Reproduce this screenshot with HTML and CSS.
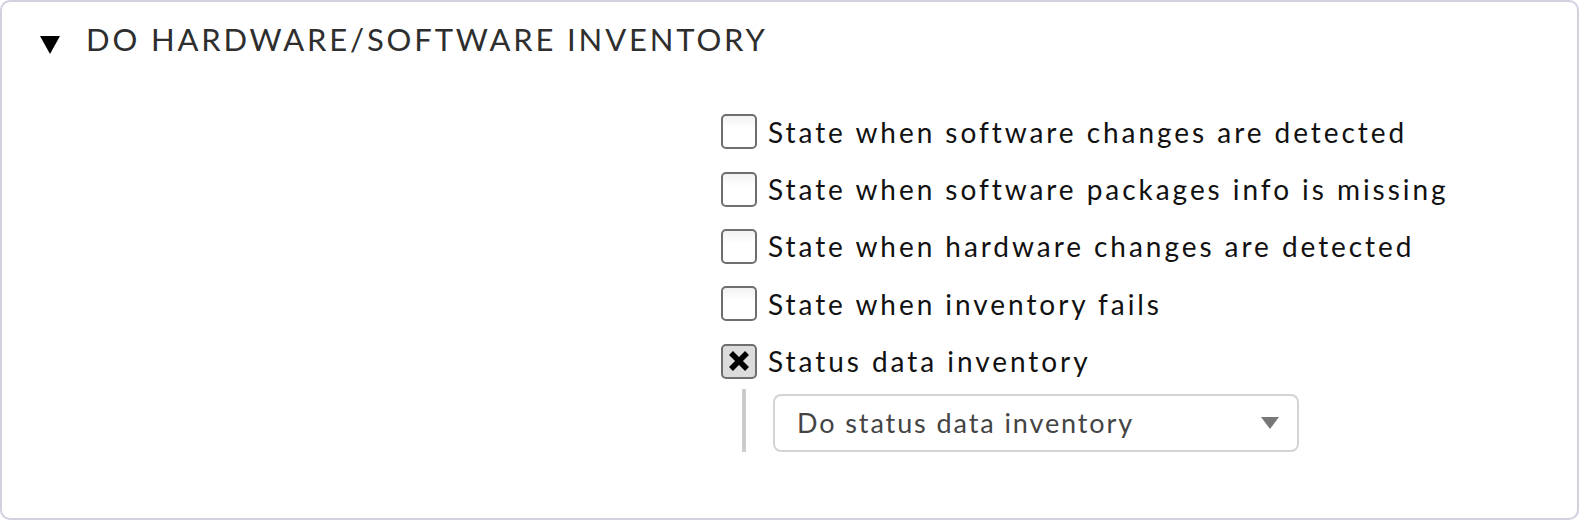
FILE: index.html
```html
<!DOCTYPE html>
<html>
<head>
<meta charset="utf-8">
<link rel="stylesheet" href="styles.css">
</head>
<body>
<div class="box">
  <div class="header">
    <span class="tri"></span>
    <span class="title">DO HARDWARE/SOFTWARE INVENTORY</span>
  </div>
  <div class="content">
    <div class="row"><span class="cb"></span><span class="label">State when software changes are detected</span></div>
    <div class="row"><span class="cb"></span><span class="label">State when software packages info is missing</span></div>
    <div class="row"><span class="cb"></span><span class="label">State when hardware changes are detected</span></div>
    <div class="row"><span class="cb"></span><span class="label">State when inventory fails</span></div>
    <div class="row"><span class="cb checked"><svg class="x" viewBox="0 0 22 20" width="22" height="20"><path d="M3 2 L19 18 M19 2 L3 18" stroke="#000" stroke-width="5.5" fill="none"/></svg></span><span class="label">Status data inventory</span></div>
    <div class="nested">
      <div class="select">
        <span class="sel-text">Do status data inventory</span>
        <span class="arrow"></span>
      </div>
    </div>
  </div>
</div>
</body>
</html>
```
FILE: styles.css
```css
html, body {
  margin: 0;
  padding: 0;
  background: #ffffff;
}
.box {
  box-sizing: border-box;
  width: 1579px;
  height: 520px;
  border: 2px solid #d0d1df;
  border-radius: 10px;
  font-family: Lato, "Noto Sans", sans-serif;
}
.header {
  display: flex;
  align-items: center;
  height: 76px;
  padding-left: 38px;
}
.tri {
  width: 0;
  height: 0;
  border-left: 10.5px solid transparent;
  border-right: 10.5px solid transparent;
  border-top: 18px solid #000;
  margin-top: 10px;
}
.title {
  margin-left: 26px;
  margin-top: -2px;
  font-size: 31px;
  letter-spacing: 2.85px;
  color: #2e2e2e;
  line-height: 1;
}
.content {
  margin-left: 719px;
  padding-top: 25px;
}
.row {
  display: flex;
  align-items: center;
  height: 57.4px;
}
.cb {
  box-sizing: border-box;
  width: 36px;
  height: 35px;
  border: 2px solid #6f6f6f;
  border-radius: 5px;
  background: linear-gradient(#f2f2f2, #ffffff 40%);
  display: flex;
  align-items: center;
  justify-content: center;
}
.cb.checked {
  background: #dcdcdc;
}
.x {
  display: block;
}
.label {
  margin-left: 11px;
  font-size: 28px;
  letter-spacing: 2.95px;
  color: #111;
}
.nested {
  margin-left: 21px;
  margin-top: -1px;
  border-left: 4px solid #cccccc;
  padding-left: 27px;
  padding-top: 5px;
  height: 58px;
}
.select {
  box-sizing: border-box;
  width: 526px;
  height: 58px;
  border: 2px solid #d4d4d4;
  border-radius: 8px;
  display: flex;
  align-items: center;
  justify-content: space-between;
  padding-left: 22px;
  padding-right: 18px;
}
.sel-text {
  font-size: 27px;
  letter-spacing: 1.9px;
  color: #444;
}
.arrow {
  width: 0;
  height: 0;
  border-left: 9px solid transparent;
  border-right: 9px solid transparent;
  border-top: 12px solid #777;
}
```
